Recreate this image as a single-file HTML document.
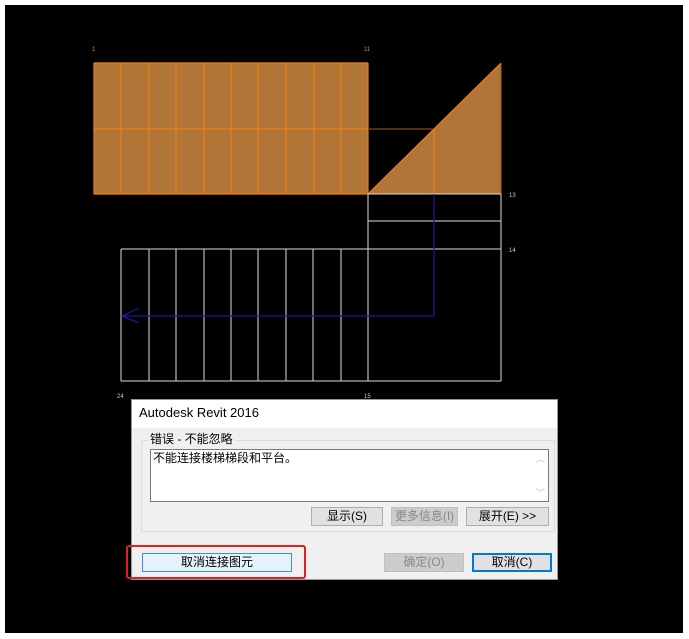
<!DOCTYPE html>
<html><head><meta charset="utf-8"><style>
body{margin:0;width:689px;height:639px;background:#fff;position:relative;overflow:hidden;font-family:"Liberation Sans","Noto Sans CJK SC",sans-serif}
.bk{position:absolute;left:5px;top:5px;width:678px;height:628px;background:#000}
.a{position:absolute}
.btn{position:absolute;background:#e1e1e1;border:1px solid #adadad;box-sizing:border-box;font-size:12px;text-align:center;color:#000;line-height:17px}
</style></head><body>
<div class="bk"></div>
<svg class="a" style="left:0;top:0" width="689" height="639">
<g font-size="6" fill="#e08020" font-family="Liberation Sans"><text x="92" y="51">1</text><text x="364" y="51">11</text></g>
<g font-size="6" fill="#ccc" font-family="Liberation Sans"><text x="509" y="197">13</text><text x="509" y="252">14</text><text x="117" y="398">24</text><text x="364" y="398">15</text></g>
<rect x="94" y="63" width="274" height="131" fill="#b07537"/>
<polygon points="368,194 501,63 501,194" fill="#b07537"/>
<g stroke="#f08010" stroke-width="1.2">
<line x1="94" y1="63" x2="368" y2="63"/><line x1="94" y1="194" x2="368" y2="194"/>
<line x1="94" y1="129" x2="368" y2="129"/>
<line x1="94" y1="63" x2="94" y2="194"/><line x1="121" y1="63" x2="121" y2="194"/><line x1="149" y1="63" x2="149" y2="194"/><line x1="176" y1="63" x2="176" y2="194"/><line x1="204" y1="63" x2="204" y2="194"/><line x1="231" y1="63" x2="231" y2="194"/><line x1="258" y1="63" x2="258" y2="194"/><line x1="286" y1="63" x2="286" y2="194"/><line x1="314" y1="63" x2="314" y2="194"/><line x1="341" y1="63" x2="341" y2="194"/><line x1="368" y1="63" x2="368" y2="194"/>
<line x1="368" y1="194" x2="501" y2="63"/><line x1="434" y1="129" x2="434" y2="194"/>
</g>
<line x1="368" y1="129" x2="434" y2="129" stroke="#8a4a10" stroke-width="1.2"/>
<line x1="501" y1="63" x2="501" y2="194" stroke="#a05a18" stroke-width="1.2"/>
<g stroke="#ddd" stroke-width="1">
<line x1="368" y1="194" x2="501" y2="194"/><line x1="368" y1="221" x2="501" y2="221"/>
<line x1="121" y1="249" x2="501" y2="249"/><line x1="121" y1="381" x2="501" y2="381"/>
<line x1="368" y1="194" x2="368" y2="381"/><line x1="501" y1="194" x2="501" y2="381"/>
<line x1="121" y1="249" x2="121" y2="381"/><line x1="149" y1="249" x2="149" y2="381"/><line x1="176" y1="249" x2="176" y2="381"/><line x1="204" y1="249" x2="204" y2="381"/><line x1="231" y1="249" x2="231" y2="381"/><line x1="258" y1="249" x2="258" y2="381"/><line x1="286" y1="249" x2="286" y2="381"/><line x1="313" y1="249" x2="313" y2="381"/><line x1="341" y1="249" x2="341" y2="381"/>
</g>
<polyline points="434,194 434,316 122,316" fill="none" stroke="#1a1a9a" stroke-width="1.2"/>
<polyline points="139,308 122,316 139,323" fill="none" stroke="#1a1a9a" stroke-width="1.2"/>
</svg>
<div class="a" style="left:131px;top:399px;width:427px;height:181px;background:#f0f0f0;border:1px solid #999;box-sizing:border-box"></div>
<div class="a" style="left:132px;top:400px;width:425px;height:28px;background:#fff"></div>
<div class="a" style="left:139px;top:405px;font-size:13px;color:#000">Autodesk Revit 2016</div>
<div class="a" style="left:141px;top:440px;width:414px;height:92px;border:1px solid #dcdcdc;box-sizing:border-box"></div>
<div class="a" style="left:148px;top:432px;font-size:12px;background:#f0f0f0;padding:0 2px;line-height:14px">错误 - 不能忽略</div>
<div class="a" style="left:150px;top:449px;width:399px;height:53px;background:#fff;border:1px solid #7a7a7a;box-sizing:border-box"></div>
<div class="a" style="left:153px;top:451px;font-size:12px;line-height:14px">不能连接楼梯梯段和平台。</div>
<div class="a" style="left:536px;top:452px;font-size:9px;color:#bbb">︿</div>
<div class="a" style="left:536px;top:486px;font-size:9px;color:#bbb">﹀</div>
<div class="btn" style="left:311px;top:507px;width:72px;height:19px">显示(S)</div>
<div class="btn" style="left:391px;top:507px;width:67px;height:19px;background:#ccc;border-color:#bfbfbf;color:#888">更多信息(I)</div>
<div class="btn" style="left:466px;top:507px;width:83px;height:19px">展开(E) &gt;&gt;</div>
<div class="btn" style="left:142px;top:553px;width:150px;height:19px;background:#e5f1fb;border-color:#3c8fd6">取消连接图元</div>
<div class="btn" style="left:384px;top:553px;width:80px;height:19px;background:#ccc;border-color:#bfbfbf;color:#888">确定(O)</div>
<div class="btn" style="left:472px;top:553px;width:80px;height:19px;border:2px solid #0078d7;line-height:15px">取消(C)</div>
<div class="a" style="left:126px;top:545px;width:180px;height:34px;border:2px solid #e02020;border-radius:3px;box-sizing:border-box"></div>
</body></html>
